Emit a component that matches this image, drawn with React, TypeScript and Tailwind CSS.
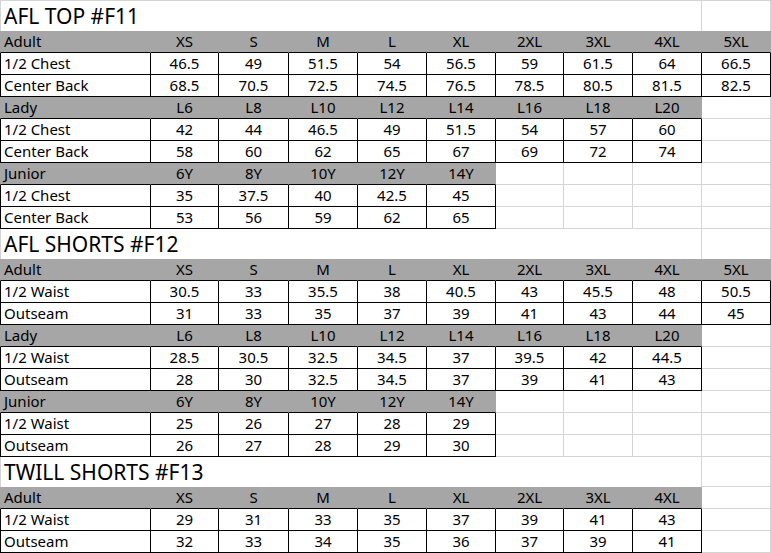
type Block = { label: string; sizes: string[]; rows: [string, string[]][] }
type Section = { title: string; blocks: Block[] }

const adult = ["XS", "S", "M", "L", "XL", "2XL", "3XL", "4XL", "5XL"]
const lady = ["L6", "L8", "L10", "L12", "L14", "L16", "L18", "L20"]
const junior = ["6Y", "8Y", "10Y", "12Y", "14Y"]

const sections: Section[] = [
  {
    title: "AFL TOP #F11",
    blocks: [
      {
        label: "Adult",
        sizes: adult,
        rows: [
          ["1/2 Chest", ["46.5", "49", "51.5", "54", "56.5", "59", "61.5", "64", "66.5"]],
          ["Center Back", ["68.5", "70.5", "72.5", "74.5", "76.5", "78.5", "80.5", "81.5", "82.5"]],
        ],
      },
      {
        label: "Lady",
        sizes: lady,
        rows: [
          ["1/2 Chest", ["42", "44", "46.5", "49", "51.5", "54", "57", "60"]],
          ["Center Back", ["58", "60", "62", "65", "67", "69", "72", "74"]],
        ],
      },
      {
        label: "Junior",
        sizes: junior,
        rows: [
          ["1/2 Chest", ["35", "37.5", "40", "42.5", "45"]],
          ["Center Back", ["53", "56", "59", "62", "65"]],
        ],
      },
    ],
  },
  {
    title: "AFL SHORTS #F12",
    blocks: [
      {
        label: "Adult",
        sizes: adult,
        rows: [
          ["1/2 Waist", ["30.5", "33", "35.5", "38", "40.5", "43", "45.5", "48", "50.5"]],
          ["Outseam", ["31", "33", "35", "37", "39", "41", "43", "44", "45"]],
        ],
      },
      {
        label: "Lady",
        sizes: lady,
        rows: [
          ["1/2 Waist", ["28.5", "30.5", "32.5", "34.5", "37", "39.5", "42", "44.5"]],
          ["Outseam", ["28", "30", "32.5", "34.5", "37", "39", "41", "43"]],
        ],
      },
      {
        label: "Junior",
        sizes: junior,
        rows: [
          ["1/2 Waist", ["25", "26", "27", "28", "29"]],
          ["Outseam", ["26", "27", "28", "29", "30"]],
        ],
      },
    ],
  },
  {
    title: "TWILL SHORTS #F13",
    blocks: [
      {
        label: "Adult",
        sizes: adult.slice(0, 8),
        rows: [
          ["1/2 Waist", ["29", "31", "33", "35", "37", "39", "41", "43"]],
          ["Outseam", ["32", "33", "34", "35", "36", "37", "39", "41"]],
        ],
      },
    ],
  },
]

type Kind = "head" | "data" | "blank"

const kindClass: Record<Kind, string> = {
  head: "bg-[#a6a6a6] border-r border-b border-r-[#a6a6a6] border-b-black",
  data: "bg-white border-r border-b border-black",
  blank: "bg-white border-r border-b border-[#d4d4d4]",
}

const leftClass: Record<Kind, string> = {
  head: "border-l border-l-[#a6a6a6]",
  data: "border-l border-l-black",
  blank: "border-l border-l-[#d4d4d4]",
}

function Row({ kind, cells }: { kind: "head" | "data"; cells: string[] }) {
  const n = cells.length
  return (
    <>
      {Array.from({ length: 10 }).map((_, c) => {
        const k: Kind = c < n ? kind : "blank"
        return (
          <div
            key={c}
            className={`flex h-[22px] items-center whitespace-nowrap ${kindClass[k]} ${
              c === 0 ? `${leftClass[k]} justify-start pl-[3px]` : "justify-center"
            }`}
          >
            {c < n ? cells[c] : ""}
          </div>
        )
      })}
    </>
  )
}

function Title({ text, coverLast }: { text: string; coverLast: boolean }) {
  return (
    <>
      <div className="col-span-9 flex h-[30px] items-center border-r border-l border-[#d4d4d4] bg-white pl-[3px] text-[21px] whitespace-nowrap">
        {text}
      </div>
      <div
        className={
          coverLast
            ? "h-[30px] border-r border-[#d4d4d4] bg-white"
            : "h-[30px] border-r border-b border-[#d4d4d4] bg-white"
        }
      />
    </>
  )
}

export default function App() {
  return (
    <div
      className="w-[771px] overflow-hidden bg-white text-[15px] leading-none text-black"
      style={{ fontFamily: '"Noto Sans", "Open Sans", "Noto Sans CJK SC", sans-serif' }}
    >
      <div className="grid grid-cols-[151px_68px_70px_69px_69px_69px_68px_69px_69px_69px] border-t border-[#d4d4d4]">
        {sections.map((s) => (
          <div key={s.title} className="contents">
            <Title text={s.title} coverLast={s.blocks[0].sizes.length === 9} />
            {s.blocks.map((b) => (
              <div key={b.label} className="contents">
                <Row kind="head" cells={[b.label, ...b.sizes]} />
                {b.rows.map(([name, vals]) => (
                  <Row key={name} kind="data" cells={[name, ...vals]} />
                ))}
              </div>
            ))}
          </div>
        ))}
      </div>
    </div>
  )
}
